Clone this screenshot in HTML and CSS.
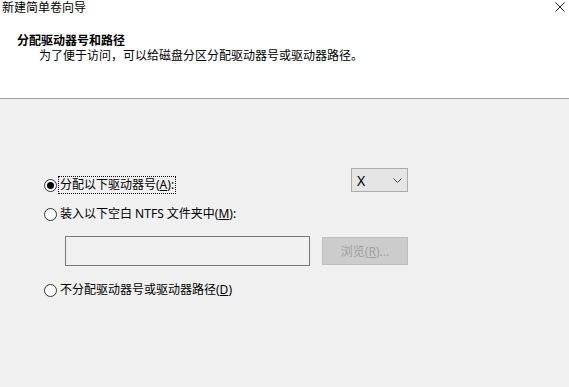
FILE: index.html
```html
<!DOCTYPE html>
<html lang="zh-CN">
<head>
    <meta charset="UTF-8">
    <title>新建简单卷向导</title>
    <link rel="stylesheet" href="styles.css">
</head>
<body>
    <div class="wizard">
        <div class="header">
            <div class="titlebar">
                <span class="title">新建简单卷向导</span>
                <svg class="close" width="10" height="10" viewBox="0 0 10 10">
                    <path d="M0.5 0.5 L9.5 9.5 M9.5 0.5 L0.5 9.5" stroke="#222" stroke-width="1" fill="none"/>
                </svg>
            </div>
            <h1>分配驱动器号和路径</h1>
            <p class="subtitle">为了便于访问，可以给磁盘分区分配驱动器号或驱动器路径。</p>
        </div>

        <div class="content">
            <div class="options">
                <div class="row first">
                    <label class="option">
                        <span class="radio checked"></span>
                        <span class="text focused">分配以下驱动器号(<u>A</u>):</span>
                    </label>
                    <div class="select">
                        <span>X</span>
                        <svg width="9" height="5" viewBox="0 0 9 5">
                            <path d="M0.5 0.5 L4.5 4.5 L8.5 0.5" stroke="#444" stroke-width="1" fill="none"/>
                        </svg>
                    </div>
                </div>

                <label class="option second">
                    <span class="radio"></span>
                    <span class="text">装入以下空白 NTFS 文件夹中(<u>M</u>):</span>
                </label>

                <div class="folder-row">
                    <div class="field"></div>
                    <button class="browse" disabled>浏览(<u>R</u>)...</button>
                </div>

                <label class="option third">
                    <span class="radio"></span>
                    <span class="text">不分配驱动器号或驱动器路径(<u>D</u>)</span>
                </label>
            </div>
        </div>
    </div>
</body>
</html>
```

FILE: styles.css
```css
* {
    margin: 0;
    padding: 0;
    box-sizing: border-box;
}

html, body {
    width: 569px;
    height: 387px;
    overflow: hidden;
}

body {
    font-family: "Noto Sans", "Noto Sans CJK SC", sans-serif;
    font-size: 12px;
    color: #000;
    background: #f0f0f0;
}

.header {
    background: #fff;
    height: 98px;
    border-bottom: 1px solid #a0a0a0;
    box-sizing: content-box;
}

.titlebar {
    display: flex;
    justify-content: space-between;
    align-items: flex-start;
    height: 16px;
    line-height: 16px;
    padding-left: 2px;
    padding-right: 4px;
}

.close {
    margin-top: 2px;
}

h1 {
    font-size: 12px;
    font-weight: bold;
    line-height: 15px;
    margin-top: 17px;
    padding-left: 17px;
}

.subtitle {
    line-height: 15px;
    padding-left: 39px;
}

.content {
    padding-top: 69px;
    padding-left: 44px;
}

.options {
    width: 364px;
}

.row {
    display: flex;
    justify-content: space-between;
    align-items: flex-end;
}

.option {
    display: flex;
    align-items: center;
    height: 14px;
    line-height: 14px;
}

.radio {
    width: 13px;
    height: 13px;
    border: 1px solid #333;
    border-radius: 50%;
    background: #fff;
    margin-right: 3px;
    display: flex;
    align-items: center;
    justify-content: center;
}

.radio.checked::after {
    content: "";
    width: 7px;
    height: 7px;
    border-radius: 50%;
    background: #000;
}

.focused {
    outline: 1px dotted #000;
    outline-offset: 1px;
}

.select {
    width: 57px;
    height: 24px;
    background: #e5e5e5;
    border: 1px solid #adadad;
    display: flex;
    align-items: center;
    justify-content: space-between;
    padding: 0 5px 0 5px;
    font-size: 14px;
}

.second {
    margin-top: 15px;
}

.folder-row {
    display: flex;
    align-items: center;
    gap: 12px;
    margin-top: 15px;
    margin-left: 21px;
}

.field {
    width: 245px;
    height: 30px;
    border: 1px solid #7a7a7a;
}

.browse {
    width: 86px;
    height: 28px;
    background: #cccccc;
    border: 1px solid #bfbfbf;
    color: #a0a0a0;
    font-family: inherit;
    font-size: 12px;
}

.third {
    margin-top: 17px;
}
```
